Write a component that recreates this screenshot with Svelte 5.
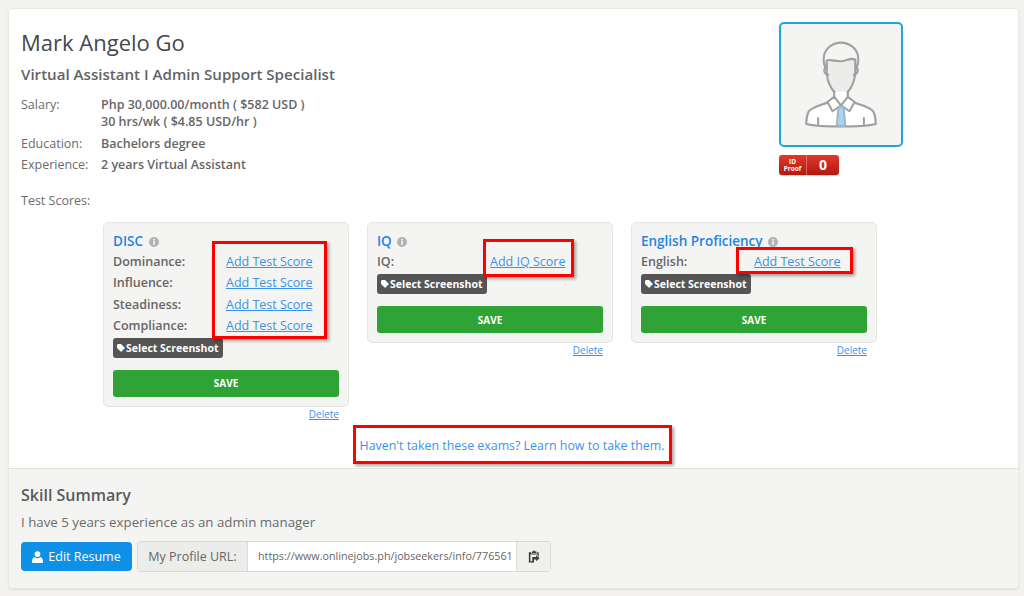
<script>
  const cards = [
    { title: 'DISC', rows: [['Dominance:', 'Add Test Score'], ['Influence:', 'Add Test Score'], ['Steadiness:', 'Add Test Score'], ['Compliance:', 'Add Test Score']], mark: 'm1' },
    { title: 'IQ', rows: [['IQ:', 'Add IQ Score']], mark: 'm2' },
    { title: 'English Proficiency', rows: [['English:', 'Add Test Score']], mark: 'm3' }
  ];
</script>

<div class="page">
  <main class="panel">
    <section class="top">
      <div class="head">
        <div class="info">
          <h1>Mark Angelo Go</h1>
          <h2>Virtual Assistant I Admin Support Specialist</h2>
          <div class="facts">
            <div class="label">Salary:</div>
            <div class="value">Php 30,000.00/month ( $582 USD )<br />30 hrs/wk ( $4.85 USD/hr )</div>
            <div class="label">Education:</div>
            <div class="value">Bachelors degree</div>
            <div class="label">Experience:</div>
            <div class="value">2 years Virtual Assistant</div>
          </div>
          <div class="label scores">Test Scores:</div>
        </div>
        <div class="side">
          <div class="avatar">
            <svg viewBox="14 14 92 108" width="78" height="92" fill="none" stroke="#a0a0a0" stroke-width="2.400" stroke-linejoin="round" stroke-linecap="round">
              <path d="M43 50c0 17 9 30 17 30s17-13 17-30V38c-7-3-10 2-18 2-6 0-11-3-16-1z" fill="#ececea" />
              <path d="M43 50c-3-4-4-10-3-17 2-8 10-15 20-15s18 7 20 15c1 7 0 13-3 17V38c-7-3-10 2-18 2-6 0-11-3-16-1z" fill="#f4f4f2" />
              <path d="M43 48c-4-1-4 7 2 8M77 48c4-1 4 7-2 8" />
              <path d="M52 76v7l-6 5c-10 4-20 6-24 11-2 4-3 9-3 15 12 3 29 3 41 3s29 0 41-3c0-6-1-11-3-15-4-5-14-7-24-11l-6-5v-7" fill="#fff" />
              <path d="M52 82l-8 6 6 11 10-7 10 7 6-11-8-6-8 10z" fill="#fff" />
              <path d="M57 94h6l2 22h-10z" fill="#a9d5ef" stroke="#9fb6c4" />
              <path d="M33 107v8M87 107v8" />
            </svg>
          </div>
          <div class="proof">
            <span class="proof-l">ID<br />Proof</span>
            <span class="proof-n">0</span>
          </div>
        </div>
      </div>

      <div class="cards">
        {#each cards as c}
          <div class="card">
            <div class="card-title">
              {c.title}
              <svg class="info-i" viewBox="0 0 10 10" width="10" height="10"><circle cx="5" cy="5" r="5" fill="#b3b3b3" /><rect x="4.200" y="4.200" width="1.700" height="3.600" fill="#f4f4f2" /><rect x="4.200" y="2" width="1.700" height="1.500" fill="#f4f4f2" /></svg>
            </div>
            {#each c.rows as r}
              <div class="row"><span class="row-l">{r[0]}</span><a href="#top" class="add">{r[1]}</a></div>
            {/each}
            <div class="tag">
              <svg viewBox="0 0 10 10" width="8" height="8"><path d="M0 1.200 1.200 0H5l5 5-4.800 5L0 5z" fill="#fff" /></svg>Select Screenshot
            </div>
            <button class="save">SAVE</button>
            <a href="#top" class="delete">Delete</a>
            <span class="mark {c.mark}"></span>
          </div>
        {/each}
      </div>

      <div class="learn-wrap">
        <a href="#top" class="learn">Haven't taken these exams? Learn how to take them.</a>
      </div>
    </section>

    <section class="bottom">
      <h3>Skill Summary</h3>
      <p>I have 5 years experience as an admin manager</p>
      <div class="actions">
        <button class="edit">
          <svg viewBox="0 0 12 13" width="11" height="12"><circle cx="6" cy="3.300" r="3.100" fill="#fff" /><path d="M0.500 13c-.5 0-.5-.6-.5-1 0-3 1-5.200 3-5.200 1 .8 2 1.100 3 1.100s2-.3 3-1.100c2 0 3 2.200 3 5.200 0 .4 0 1-.5 1z" fill="#fff" /></svg>
          Edit Resume
        </button>
        <div class="url">
          <span class="addon">My Profile URL:</span>
          <span class="field">https://www.onlinejobs.ph/jobseekers/info/776561</span>
          <span class="copy">
            <svg viewBox="0 0 14 16" width="12" height="14"><path d="M4.500 1.500h1.500a1.200 1.200 0 0 1 2.400 0h1.500v2h-5.400z M1 2.500h2.700v1.800h7v-1.800h1.800v5h-1.300v-2.400h-8.400v8h3.200v1.400h-5z" fill="#3c3c3c" /><path d="M5 8h4.500V6l4 3.500-4 3.500v-2H7v3.500H5z" fill="#3c3c3c" /></svg>
          </span>
        </div>
      </div>
    </section>
  </main>
</div>

<style>
  :global(body) {
    margin: 0;
    background: #f3f2ee;
    font-family: "Open Sans", "Liberation Sans", sans-serif;
    color: #5a5a5a;
  }
  .page {
    height: 596px;
    padding: 8px 5px 7px 8px;
    box-sizing: border-box;
    overflow: hidden;
  }
  .panel {
    height: 581px;
    border: 1px solid #e8e8e4;
    border-radius: 4px;
    box-sizing: border-box;
    background: #fff;
    display: flex;
    flex-direction: column;
    overflow: hidden;
    box-shadow: 0 1px 2px rgba(0, 0, 0, 0.08);
  }
  .top {
    height: 459px;
    box-sizing: border-box;
    padding: 17px 0 0 12px;
  }
  .head {
    display: flex;
    height: 196px;
  }
  .info {
    flex: 1;
  }
  h1 {
    margin: 0;
    font-size: 22px;
    line-height: 32px;
    font-weight: 400;
    color: #44494d;
  }
  h2 {
    margin: 6px 0 0;
    font-size: 15.100px;
    line-height: 20px;
    font-weight: 600;
    color: #5f6468;
  }
  .facts {
    margin-top: 12px;
    display: grid;
    grid-template-columns: 80px 1fr;
    row-gap: 4.500px;
    font-size: 12.500px;
    line-height: 17px;
  }
  .label {
    color: #6b6b6b;
    font-size: 12.500px;
    line-height: 17px;
  }
  .value {
    font-weight: 600;
    color: #666;
  }
  .scores {
    margin-top: 19px;
  }
  .side {
    width: 124px;
    margin-right: 115px;
    margin-top: -4px;
  }
  .avatar {
    width: 124px;
    height: 125px;
    box-sizing: border-box;
    border: 2px solid #1ca7d8;
    border-radius: 5px;
    background: #f4f4f2;
    display: flex;
    align-items: center;
    justify-content: center;
  }
  .proof {
    margin-top: 8px;
    width: 60px;
    height: 20px;
    border-radius: 3px;
    background: linear-gradient(#e0392b, #b3180f);
    display: flex;
    color: #fff;
    box-shadow: 0 1px 1px rgba(0, 0, 0, 0.2);
  }
  .proof-l {
    width: 28px;
    font-size: 6.500px;
    line-height: 7px;
    font-weight: 700;
    text-align: center;
    padding-top: 3px;
    box-sizing: border-box;
    border-right: 1px solid rgba(255, 255, 255, 0.3);
  }
  .proof-n {
    flex: 1;
    text-align: center;
    font-size: 14px;
    line-height: 20px;
    font-weight: 700;
  }
  .cards {
    display: flex;
    align-items: flex-start;
    gap: 18px;
    margin-left: 82px;
  }
  .card {
    position: relative;
    width: 246px;
    box-sizing: border-box;
    padding: 9px 9px 9px;
    background: #f4f4f2;
    border: 1px solid #e5e5e2;
    border-radius: 5px;
  }
  .card-title {
    font-size: 13.500px;
    line-height: 19px;
    font-weight: 600;
    color: #1f84e4;
  }
  .info-i {
    margin-left: 2px;
    vertical-align: -1px;
  }
  .row {
    display: flex;
    height: 21.300px;
    align-items: center;
    font-size: 12.500px;
    font-weight: 600;
    color: #666;
  }
  .row-l {
    width: 113px;
  }
  .add {
    font-weight: 400;
    color: #3a93ea;
    font-size: 12.500px;
  }
  .tag {
    margin-top: 2px;
    display: flex;
    align-items: center;
    gap: 1px;
    width: 110px;
    height: 20px;
    box-sizing: border-box;
    padding-left: 4px;
    border-radius: 3px;
    background: #555;
    color: #fff;
    font-size: 10.500px;
    font-weight: 700;
    white-space: nowrap;
  }
  .save {
    display: block;
    width: 100%;
    height: 26.500px;
    margin-top: 12px;
    border: 0;
    border-radius: 3px;
    background: #30a336;
    color: #fff;
    font: 700 10px "Open Sans", sans-serif;
  }
  .delete {
    position: absolute;
    right: 9px;
    bottom: -15px;
    font-size: 10px;
    line-height: 13px;
    color: #3a93ea;
  }
  .mark {
    position: absolute;
    border: 3px solid #f00;
    box-sizing: border-box;
    box-shadow: 2px 2px 3px rgba(0, 0, 0, 0.35);
    pointer-events: none;
  }
  .m1 { left: 108px; top: 18px; width: 115px; height: 98px; }
  .m2 { left: 115px; top: 16px; width: 91px; height: 38px; }
  .m3 { left: 104px; top: 24px; width: 117px; height: 27px; }
  .learn-wrap {
    text-align: center;
    margin-top: 18px;
    padding-right: 15px;
  }
  .learn {
    display: inline-block;
    box-sizing: border-box;
    width: 319px;
    height: 39px;
    line-height: 36px;
    border: 3px solid #f00;
    box-shadow: 2px 2px 3px rgba(0, 0, 0, 0.35);
    font-size: 12.400px;
    color: #3a93ea;
    text-decoration: none;
    white-space: nowrap;
    text-align: center;
  }
  .bottom {
    flex: 1;
    background: #f4f4f2;
    border-top: 1px solid #e2e2df;
    padding: 16px 12px 0;
  }
  h3 {
    margin: 0;
    font-size: 16px;
    line-height: 21px;
    font-weight: 600;
    color: #565b60;
  }
  .bottom p {
    margin: 7px 0 0;
    font-size: 13.300px;
    line-height: 18px;
    color: #6b6b6b;
  }
  .actions {
    display: flex;
    align-items: center;
    gap: 5px;
    margin-top: 10px;
  }
  .edit {
    display: flex;
    align-items: center;
    justify-content: center;
    gap: 5px;
    width: 111px;
    height: 29px;
    border: 0;
    border-radius: 4px;
    background: #0f90e8;
    color: #fff;
    font: 400 12.500px "Open Sans", sans-serif;
  }
  .url {
    display: flex;
    width: 414px;
    height: 31px;
    box-sizing: border-box;
    border: 1px solid #d9d9d6;
    border-radius: 3px;
    font-size: 12.500px;
    line-height: 29px;
  }
  .addon {
    width: 110px;
    text-align: center;
    background: #ececea;
    color: #666;
    border-right: 1px solid #dcdcd9;
    box-sizing: border-box;
  }
  .field {
    width: 268px;
    box-sizing: border-box;
    padding-left: 10px;
    background: #fff;
    font-size: 10.750px;
    color: #666;
    white-space: nowrap;
    overflow: hidden;
  }
  .copy {
    flex: 1;
    display: flex;
    align-items: center;
    justify-content: center;
    background: #f0f0ee;
    border-left: 1px solid #dcdcd9;
  }
</style>
